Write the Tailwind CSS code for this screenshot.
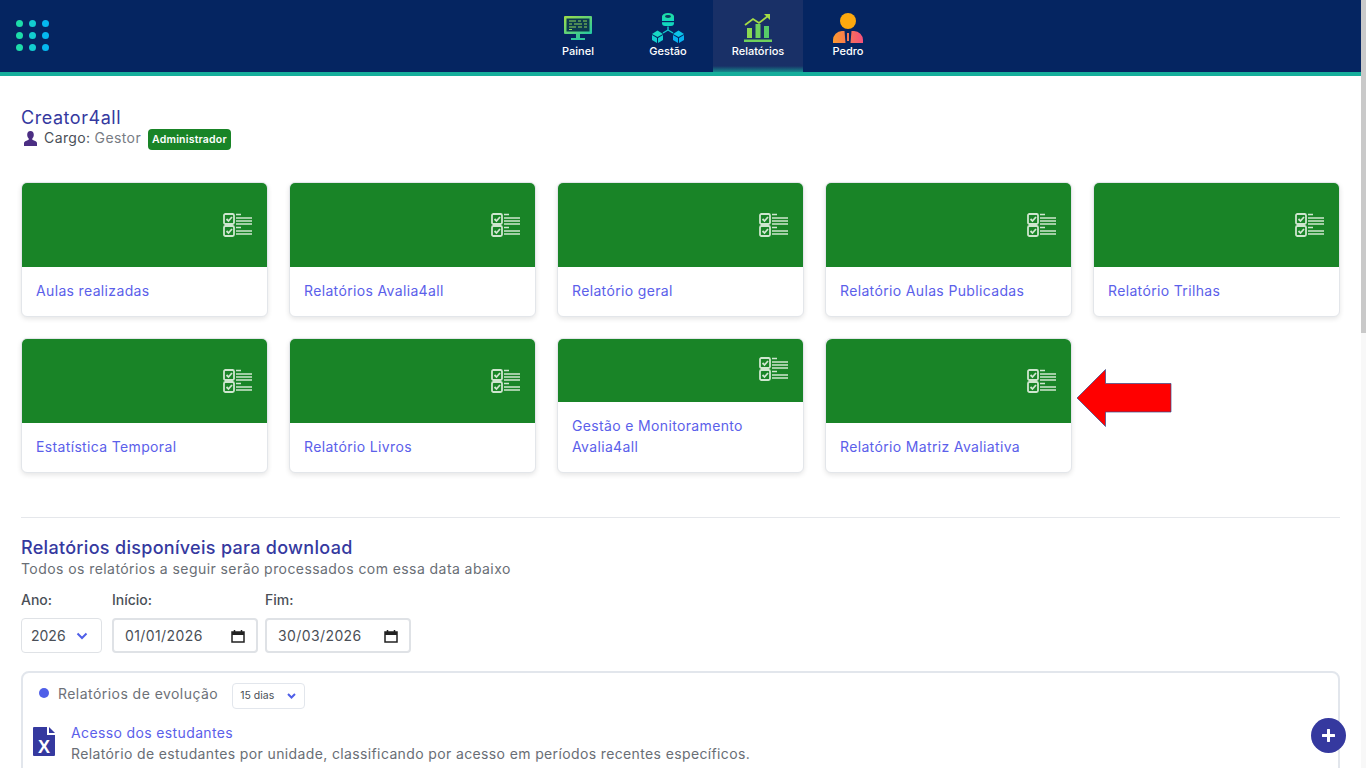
<!DOCTYPE html>
<html lang="pt-BR">
  <head>
    <meta charset="UTF-8" />
    <meta name="viewport" content="width=device-width, initial-scale=1.0" />
    <title>Relatórios</title>
    <script src="https://cdn.jsdelivr.net/npm/@tailwindcss/browser@4"></script>
  </head>
  <body class="h-screen overflow-hidden bg-white font-['Inter',sans-serif] text-[#5f6368]">
    <!-- Top bar -->
    <header class="h-[76px] bg-[#052561] border-b-4 border-[#15ae9b] relative flex justify-center">
      <div class="absolute left-[16px] top-[20px] grid grid-cols-3 gap-x-[6px] gap-y-[5px]">
        <span class="size-[7px] rounded-full bg-[#1ddcaa]"></span><span class="size-[7px] rounded-full bg-[#12cdd0]"></span><span class="size-[7px] rounded-full bg-[#05b8f0]"></span>
        <span class="size-[7px] rounded-full bg-[#1ddcaa]"></span><span class="size-[7px] rounded-full bg-[#12cdd0]"></span><span class="size-[7px] rounded-full bg-[#05b8f0]"></span>
        <span class="size-[7px] rounded-full bg-[#1ddcaa]"></span><span class="size-[7px] rounded-full bg-[#12cdd0]"></span><span class="size-[7px] rounded-full bg-[#05b8f0]"></span>
      </div>
      <nav class="ml-[60px] flex text-white text-[11px] font-medium text-center">
        <a class="w-[90px] h-[72px] flex flex-col items-center pt-[13px]">
          <div class="h-[30px] flex items-center">
            <svg width="28" height="24" viewBox="0 0 28 24">
              <defs>
                <linearGradient id="painelGrad" x1="0" y1="0" x2="1" y2="1">
                  <stop offset="0" stop-color="#a0dc48" />
                  <stop offset="1" stop-color="#22c9a5" />
                </linearGradient>
              </defs>
              <rect x="0" y="0" width="28" height="18" rx="1" fill="url(#painelGrad)" />
              <rect x="2.500" y="2.500" width="23" height="13" fill="#0b3a4f" />
              <path d="M5 5h7M14 5h3M19 5h4M5 8h3M10 8h8M20 8h3M5 11h7M14 11h4M20 11h3M5 13.500h3" stroke="#8fd85a" stroke-width="1.200" />
              <rect x="12" y="18" width="4" height="4" fill="#3cc78e" />
              <rect x="7" y="22" width="14" height="2" fill="#2fc79c" />
            </svg>
          </div>
          <span class="leading-[16px]">Painel</span>
        </a>
        <a class="w-[90px] h-[72px] flex flex-col items-center pt-[13px]">
          <div class="h-[30px] flex items-center">
            <svg width="32" height="30" viewBox="0 0 32 30">
              <rect x="10" y="2" width="12" height="11" rx="3" fill="#12d8be" />
              <ellipse cx="16" cy="3.500" rx="6" ry="3.500" fill="#1ddcaa" />
              <ellipse cx="16" cy="3.500" rx="3" ry="1.400" fill="#0b3a5f" />
              <rect x="10" y="8" width="12" height="1.200" fill="#052561" />
              <path d="M16 13.500v3.500M16 17l-5 3M16 17l5 3" stroke="#12cdd0" stroke-width="1.400" fill="none" />
              <path d="M0 21l5.500-3.500 5.500 3.500-5.500 3z" fill="#18d8c4" />
              <path d="M0 22l5 3v5l-5-3zM11 22l-5 3v5l5-3z" fill="#12cdd0" />
              <path d="M21 21l5.500-3.500 5.500 3.500-5.500 3z" fill="#0cc4e8" />
              <path d="M21 22l5 3v5l-5-3zM32 22l-5 3v5l5-3z" fill="#05b0f0" />
            </svg>
          </div>
          <span class="leading-[16px]">Gestão</span>
        </a>
        <a class="relative w-[90px] h-[72px] flex flex-col items-center pt-[13px] bg-[#193067]">
          <div class="h-[30px] flex items-center">
            <svg width="28" height="28" viewBox="0 0 28 28">
              <path d="M1 11l8-6 6 4 9-7" stroke="#a5dc45" stroke-width="1.800" fill="none" />
              <path d="M20 0h6v6z" fill="#a5dc45" />
              <rect x="3" y="14" width="5" height="10" fill="#8ad850" />
              <rect x="11.500" y="10" width="5" height="14" fill="#70d25c" />
              <rect x="20" y="12" width="5" height="12" fill="#56cc68" />
              <rect x="0" y="25.500" width="28" height="2.500" fill="#70d25c" />
            </svg>
          </div>
          <span class="leading-[16px]">Relatórios</span>
          <span class="absolute bottom-0 inset-x-0 h-[6px] bg-linear-to-b from-transparent to-[#15ae9b]/70"></span>
        </a>
        <a class="w-[90px] h-[72px] flex flex-col items-center pt-[13px]">
          <div class="h-[30px] flex items-center">
            <svg width="30" height="30" viewBox="0 0 30 30">
              <defs>
                <linearGradient id="pedroBody" x1="0" y1="0" x2="1" y2="0">
                  <stop offset="0" stop-color="#fd9a2c" />
                  <stop offset="1" stop-color="#f4507c" />
                </linearGradient>
              </defs>
              <circle cx="15" cy="8" r="8" fill="#fda90e" />
              <path d="M0 30v-3a9 9 0 0 1 9-9h2.500l1 12zM17.500 30l1-12H21a9 9 0 0 1 9 9v3z" fill="url(#pedroBody)" />
              <rect x="14" y="20" width="2" height="8" fill="#f47a55" />
            </svg>
          </div>
          <span class="leading-[16px]">Pedro</span>
        </a>
      </nav>
    </header>

    <main class="h-[692px] overflow-hidden pl-[21px] pt-[30px] pr-[26px]">
      <h1 class="-mb-[1px] text-[18px] leading-[24px] tracking-[0.55px] text-[#35399f]">Creator4all</h1>
      <div class="flex items-start h-[21px] text-[14px] tracking-[0.4px]">
        <svg class="mt-[2px] ml-[3px] mr-[7px]" width="13" height="15" viewBox="0 0 13 15">
          <path d="M6.500 0c2.200 0 3.300 1.700 3.300 3.700 0 1.600-.7 3-1.500 3.800v1.200l3.400 1.500c1 .5 1.300 1.300 1.300 2.300V15H0v-2.500c0-1 .3-1.800 1.300-2.300l3.400-1.500V7.500C3.900 6.700 3.200 5.300 3.200 3.700 3.200 1.700 4.300 0 6.500 0z" fill="#4b2e83" />
        </svg>
        <span class="leading-[18px] text-[#4a4f57]">Cargo:</span><span class="ml-[4px] leading-[18px] text-[#777c84]">Gestor</span>
        <span class="ml-[7px] h-[21px] px-[4px] rounded-[4px] bg-[#198427] text-white text-[10.500px] tracking-[0.2px] font-semibold leading-[21px]">Administrador</span>
      </div>

      <!-- Report cards -->
      <section class="mt-[32px] grid grid-cols-5 gap-[21px]">
        <a class="h-[135px] rounded-[6px] bg-white border border-[#e3e6ea] shadow-[0_2px_5px_rgba(0,0,0,0.1)] flex flex-col overflow-hidden">
          <div class="h-[84px] bg-[#198427] flex justify-end pt-[30px] pr-[14px]"><svg width="30" height="24" viewBox="0 0 30 24" fill="none" stroke="#cfe6cf"><rect x="1" y="1" width="10" height="10" rx="1.500" stroke-width="1.800" /><rect x="1" y="13" width="10" height="10" rx="1.500" stroke-width="1.800" /><path d="M3.500 6l2 2 3.500-4M3.500 18l2 2 3.500-4" stroke-width="1.800" /><path d="M13 1.500h5M13 5h16M13 8h16M13 11h16M13 14.500h5M13 18h16M13 21h16" stroke-width="1.400" /></svg></div>
          <div class="flex-1 flex items-center px-[14px] pb-[2px] text-[14px] tracking-[0.35px] leading-[21px] text-[#5b60ea]">Aulas realizadas</div>
        </a>
        <a class="h-[135px] rounded-[6px] bg-white border border-[#e3e6ea] shadow-[0_2px_5px_rgba(0,0,0,0.1)] flex flex-col overflow-hidden">
          <div class="h-[84px] bg-[#198427] flex justify-end pt-[30px] pr-[14px]"><svg width="30" height="24" viewBox="0 0 30 24" fill="none" stroke="#cfe6cf"><rect x="1" y="1" width="10" height="10" rx="1.500" stroke-width="1.800" /><rect x="1" y="13" width="10" height="10" rx="1.500" stroke-width="1.800" /><path d="M3.500 6l2 2 3.500-4M3.500 18l2 2 3.500-4" stroke-width="1.800" /><path d="M13 1.500h5M13 5h16M13 8h16M13 11h16M13 14.500h5M13 18h16M13 21h16" stroke-width="1.400" /></svg></div>
          <div class="flex-1 flex items-center px-[14px] pb-[2px] text-[14px] tracking-[0.35px] leading-[21px] text-[#5b60ea]">Relatórios Avalia4all</div>
        </a>
        <a class="h-[135px] rounded-[6px] bg-white border border-[#e3e6ea] shadow-[0_2px_5px_rgba(0,0,0,0.1)] flex flex-col overflow-hidden">
          <div class="h-[84px] bg-[#198427] flex justify-end pt-[30px] pr-[14px]"><svg width="30" height="24" viewBox="0 0 30 24" fill="none" stroke="#cfe6cf"><rect x="1" y="1" width="10" height="10" rx="1.500" stroke-width="1.800" /><rect x="1" y="13" width="10" height="10" rx="1.500" stroke-width="1.800" /><path d="M3.500 6l2 2 3.500-4M3.500 18l2 2 3.500-4" stroke-width="1.800" /><path d="M13 1.500h5M13 5h16M13 8h16M13 11h16M13 14.500h5M13 18h16M13 21h16" stroke-width="1.400" /></svg></div>
          <div class="flex-1 flex items-center px-[14px] pb-[2px] text-[14px] tracking-[0.35px] leading-[21px] text-[#5b60ea]">Relatório geral</div>
        </a>
        <a class="h-[135px] rounded-[6px] bg-white border border-[#e3e6ea] shadow-[0_2px_5px_rgba(0,0,0,0.1)] flex flex-col overflow-hidden">
          <div class="h-[84px] bg-[#198427] flex justify-end pt-[30px] pr-[14px]"><svg width="30" height="24" viewBox="0 0 30 24" fill="none" stroke="#cfe6cf"><rect x="1" y="1" width="10" height="10" rx="1.500" stroke-width="1.800" /><rect x="1" y="13" width="10" height="10" rx="1.500" stroke-width="1.800" /><path d="M3.500 6l2 2 3.500-4M3.500 18l2 2 3.500-4" stroke-width="1.800" /><path d="M13 1.500h5M13 5h16M13 8h16M13 11h16M13 14.500h5M13 18h16M13 21h16" stroke-width="1.400" /></svg></div>
          <div class="flex-1 flex items-center px-[14px] pb-[2px] text-[14px] tracking-[0.35px] leading-[21px] text-[#5b60ea]">Relatório Aulas Publicadas</div>
        </a>
        <a class="h-[135px] rounded-[6px] bg-white border border-[#e3e6ea] shadow-[0_2px_5px_rgba(0,0,0,0.1)] flex flex-col overflow-hidden">
          <div class="h-[84px] bg-[#198427] flex justify-end pt-[30px] pr-[14px]"><svg width="30" height="24" viewBox="0 0 30 24" fill="none" stroke="#cfe6cf"><rect x="1" y="1" width="10" height="10" rx="1.500" stroke-width="1.800" /><rect x="1" y="13" width="10" height="10" rx="1.500" stroke-width="1.800" /><path d="M3.500 6l2 2 3.500-4M3.500 18l2 2 3.500-4" stroke-width="1.800" /><path d="M13 1.500h5M13 5h16M13 8h16M13 11h16M13 14.500h5M13 18h16M13 21h16" stroke-width="1.400" /></svg></div>
          <div class="flex-1 flex items-center px-[14px] pb-[2px] text-[14px] tracking-[0.35px] leading-[21px] text-[#5b60ea]">Relatório Trilhas</div>
        </a>
        <a class="h-[135px] rounded-[6px] bg-white border border-[#e3e6ea] shadow-[0_2px_5px_rgba(0,0,0,0.1)] flex flex-col overflow-hidden">
          <div class="h-[84px] bg-[#198427] flex justify-end pt-[30px] pr-[14px]"><svg width="30" height="24" viewBox="0 0 30 24" fill="none" stroke="#cfe6cf"><rect x="1" y="1" width="10" height="10" rx="1.500" stroke-width="1.800" /><rect x="1" y="13" width="10" height="10" rx="1.500" stroke-width="1.800" /><path d="M3.500 6l2 2 3.500-4M3.500 18l2 2 3.500-4" stroke-width="1.800" /><path d="M13 1.500h5M13 5h16M13 8h16M13 11h16M13 14.500h5M13 18h16M13 21h16" stroke-width="1.400" /></svg></div>
          <div class="flex-1 flex items-center px-[14px] pb-[2px] text-[14px] tracking-[0.35px] leading-[21px] text-[#5b60ea]">Estatística Temporal</div>
        </a>
        <a class="h-[135px] rounded-[6px] bg-white border border-[#e3e6ea] shadow-[0_2px_5px_rgba(0,0,0,0.1)] flex flex-col overflow-hidden">
          <div class="h-[84px] bg-[#198427] flex justify-end pt-[30px] pr-[14px]"><svg width="30" height="24" viewBox="0 0 30 24" fill="none" stroke="#cfe6cf"><rect x="1" y="1" width="10" height="10" rx="1.500" stroke-width="1.800" /><rect x="1" y="13" width="10" height="10" rx="1.500" stroke-width="1.800" /><path d="M3.500 6l2 2 3.500-4M3.500 18l2 2 3.500-4" stroke-width="1.800" /><path d="M13 1.500h5M13 5h16M13 8h16M13 11h16M13 14.500h5M13 18h16M13 21h16" stroke-width="1.400" /></svg></div>
          <div class="flex-1 flex items-center px-[14px] pb-[2px] text-[14px] tracking-[0.35px] leading-[21px] text-[#5b60ea]">Relatório Livros</div>
        </a>
        <a class="h-[135px] rounded-[6px] bg-white border border-[#e3e6ea] shadow-[0_2px_5px_rgba(0,0,0,0.1)] flex flex-col overflow-hidden">
          <div class="h-[63px] bg-[#198427] flex justify-end pt-[18px] pr-[14px]"><svg width="30" height="24" viewBox="0 0 30 24" fill="none" stroke="#cfe6cf"><rect x="1" y="1" width="10" height="10" rx="1.500" stroke-width="1.800" /><rect x="1" y="13" width="10" height="10" rx="1.500" stroke-width="1.800" /><path d="M3.500 6l2 2 3.500-4M3.500 18l2 2 3.500-4" stroke-width="1.800" /><path d="M13 1.500h5M13 5h16M13 8h16M13 11h16M13 14.500h5M13 18h16M13 21h16" stroke-width="1.400" /></svg></div>
          <div class="flex-1 flex items-center px-[14px] pb-[2px] text-[14px] tracking-[0.35px] leading-[21px] text-[#5b60ea]">Gestão e Monitoramento Avalia4all</div>
        </a>
        <a class="relative h-[135px] rounded-[6px] bg-white border border-[#e3e6ea] shadow-[0_2px_5px_rgba(0,0,0,0.1)] flex flex-col">
          <div class="h-[84px] rounded-t-[6px] bg-[#198427] flex justify-end pt-[30px] pr-[14px]"><svg width="30" height="24" viewBox="0 0 30 24" fill="none" stroke="#cfe6cf"><rect x="1" y="1" width="10" height="10" rx="1.500" stroke-width="1.800" /><rect x="1" y="13" width="10" height="10" rx="1.500" stroke-width="1.800" /><path d="M3.500 6l2 2 3.500-4M3.500 18l2 2 3.500-4" stroke-width="1.800" /><path d="M13 1.500h5M13 5h16M13 8h16M13 11h16M13 14.500h5M13 18h16M13 21h16" stroke-width="1.400" /></svg></div>
          <div class="flex-1 flex items-center px-[14px] pb-[2px] text-[14px] tracking-[0.35px] leading-[21px] text-[#5b60ea]">Relatório Matriz Avaliativa</div>
          <svg class="absolute left-[250px] top-[30px]" width="96" height="58" viewBox="0 0 96 58"><path d="M1 29L29.500 .5V14.500H95V43H29.500V57.500z" fill="#ff0000" stroke="#2f4f8f" stroke-width="0.700" /></svg>
        </a>
      </section>

      <hr class="mt-[44px] border-[#e5e7eb]" />

      <h2 class="mt-[18px] text-[18px] tracking-[0.3px] leading-[24px] font-medium text-[#35399f]">Relatórios disponíveis para download</h2>
      <p class="text-[14px] tracking-[0.43px] leading-[18px] text-[#696e75]">Todos os relatórios a seguir serão processados com essa data abaixo</p>

      <div class="mt-[12px] flex gap-[10px] text-[14px] text-[#4a4f57]">
        <div class="w-[81px]">
          <div class="leading-[20px] font-medium">Ano:</div>
          <div class="mt-[8px] h-[35px] border border-[#dfe2e6] rounded-[4px] flex items-center justify-between pl-[9px] pr-[13px]">
            <span>2026</span>
            <svg width="12" height="8" viewBox="0 0 12 8"><path d="M1.500 1.500L6 6l4.500-4.500" stroke="#4f5fe8" stroke-width="2" fill="none" /></svg>
          </div>
        </div>
        <div class="w-[146px]">
          <div class="leading-[20px] font-medium">Início:</div>
          <div class="mt-[8px] h-[35px] border-2 border-[#dfe2e6] rounded-[4px] flex items-center justify-between pl-[11px] pr-[11px]">
            <span class="tracking-[0.4px]">01/01/2026</span>
            <svg width="14" height="14" viewBox="0 0 14 14"><path d="M1 3h12v10H1z" fill="none" stroke="#222" stroke-width="1.500" /><rect x="1" y="3" width="12" height="3" fill="#222" /><path d="M3.500 1v2M10.500 1v2" stroke="#222" stroke-width="1.500" /></svg>
          </div>
        </div>
        <div class="-ml-[3px] w-[146px]">
          <div class="leading-[20px] font-medium">Fim:</div>
          <div class="mt-[8px] h-[35px] border-2 border-[#dfe2e6] rounded-[4px] flex items-center justify-between pl-[11px] pr-[11px]">
            <span class="tracking-[0.4px]">30/03/2026</span>
            <svg width="14" height="14" viewBox="0 0 14 14"><path d="M1 3h12v10H1z" fill="none" stroke="#222" stroke-width="1.500" /><rect x="1" y="3" width="12" height="3" fill="#222" /><path d="M3.500 1v2M10.500 1v2" stroke="#222" stroke-width="1.500" /></svg>
          </div>
        </div>
      </div>

      <!-- Evolution reports -->
      <div class="mt-[18px] h-[200px] border-2 border-[#e2e6ec] rounded-[8px] px-[16px] pt-[10px]">
        <div class="flex items-start h-[26px]">
          <span class="mt-[5px] size-[10px] rounded-full bg-[#4f5fe8]"></span>
          <span class="ml-[9px] text-[14px] tracking-[0.45px] leading-[22px] text-[#6d7178]">Relatórios de evolução</span>
          <span class="ml-[14px] w-[73px] h-[26px] border border-[#e2e6ec] rounded-[4px] flex items-center justify-between pl-[7px] pr-[8px] text-[10.500px] text-[#4a4f57]">15 dias
            <svg width="9" height="6" viewBox="0 0 9 6"><path d="M1 1l3.500 3.500L8 1" stroke="#4f5fe8" stroke-width="2" fill="none" /></svg>
          </span>
        </div>
        <div class="mt-[13px] flex">
          <svg class="mt-[5px] -ml-[6px]" width="22" height="29" viewBox="0 0 22 29">
            <path d="M1 0h13v8h8v20a1 1 0 0 1-1 1H1a1 1 0 0 1-1-1V1a1 1 0 0 1 1-1z" fill="#35399f" />
            <path d="M16 0l6 6h-6z" fill="#35399f" />
            <text x="11" y="26" text-anchor="middle" fill="#fff" font-family="Liberation Sans" font-size="18" font-weight="700">X</text>
          </svg>
          <div class="ml-[16px]">
            <div class="text-[14px] tracking-[0.37px] leading-[21px] text-[#5b60ea]">Acesso dos estudantes</div>
            <div class="text-[14px] tracking-[0.37px] leading-[21px] text-[#696e75]">Relatório de estudantes por unidade, classificando por acesso em períodos recentes específicos.</div>
          </div>
        </div>
      </div>
    </main>

    <!-- Scrollbar -->
    <div class="fixed right-0 top-0 bottom-0 w-[5px] bg-[#f8f8f8]"><div class="h-[333px] bg-[#c9c9c9]"></div></div>

    <button class="fixed left-[1311px] top-[718px] size-[35px] rounded-full bg-[#35399f] flex items-center justify-center">
      <svg width="13" height="13" viewBox="0 0 13 13"><path d="M6.500 1v11M1 6.500h11" stroke="#fff" stroke-width="3" stroke-linecap="round" /></svg>
    </button>
  </body>
</html>
